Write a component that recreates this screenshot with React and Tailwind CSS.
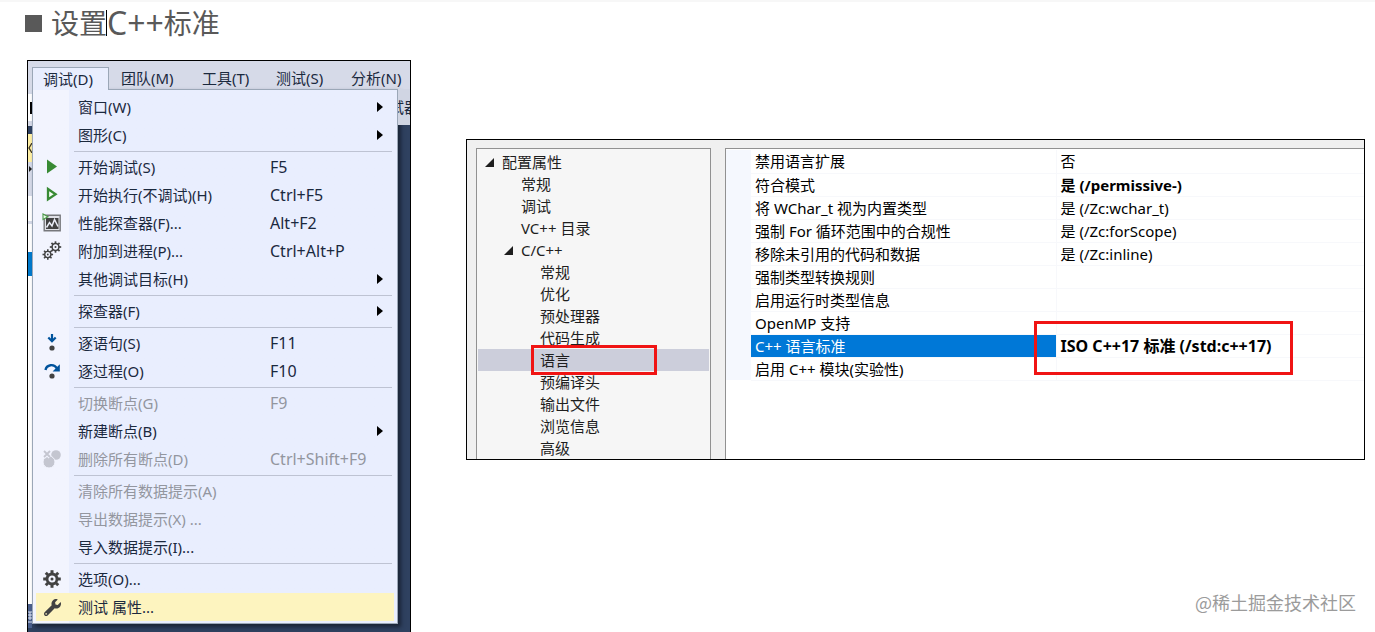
import React from 'react';
import { FaWrench } from 'react-icons/fa';

const FONT = "font-['Noto_Sans','Noto_Sans_CJK_SC',sans-serif]";

const TEETH = [0, 45, 90, 135, 180, 225, 270, 315];

const Cog = ({ cx, cy, r, width, tooth, toothWidth, hub }) => (
  <g stroke="currentColor" fill="none">
    <circle cx={cx} cy={cy} r={r} strokeWidth={width} />
    {TEETH.map((deg) => (
      <path
        key={deg}
        d={`M${cx} ${cy - r}v${-tooth}`}
        strokeWidth={toothWidth}
        transform={`rotate(${deg} ${cx} ${cy})`}
      />
    ))}
    <circle cx={cx} cy={cy} r={hub} fill="currentColor" stroke="none" />
  </g>
);

const icons = {
  start: (
    <svg viewBox="0 0 20 20" className="size-5 text-[#388a34]">
      <path d="M5 2.5v14L15 9.5z" fill="currentColor" />
    </svg>
  ),
  startNoDebug: (
    <svg viewBox="0 0 20 20" className="size-5 text-[#388a34]">
      <path d="M6 4v10.400l7.600-5.200z" fill="#f5fff5" stroke="currentColor" strokeWidth="2.3" />
    </svg>
  ),
  profiler: (
    <svg viewBox="0 0 20 20" className="size-5 text-[#424242]">
      <path d="M2.2 2.2h16v15.6h-16z" fill="#dfe0e6" stroke="#77787c" strokeWidth="1.4" />
      <path d="M4 5h12.5v11H4z" fill="currentColor" />
      <path d="M4.5 14.5l3-5 2.5 3.5 2.5-6.5 3.5 7" fill="none" stroke="#eceef8" strokeWidth="1.5" />
      <path d="M1 1v5.5l5-2.8z" fill="#eefaee" stroke="#4c9a48" strokeWidth="1.1" />
    </svg>
  ),
  attach: (
    <svg viewBox="0 0 20 20" className="size-5 text-[#424242]">
      <Cog cx={13.5} cy={6} r={3.4} width={1.5} tooth={2.300} toothWidth={1.7} hub={1} />
      <Cog cx={5.8} cy={13.5} r={3.100} width={1.4} tooth={2.200} toothWidth={1.6} hub={0.9} />
    </svg>
  ),
  stepInto: (
    <svg viewBox="0 0 20 20" className="size-5">
      <path d="M10 1v7M6.3 4.5L10 8.2l3.7-3.7" fill="none" stroke="#00539c" strokeWidth="2.2" />
      <circle cx="10" cy="15" r="2.6" fill="#424242" />
    </svg>
  ),
  stepOver: (
    <svg viewBox="0 0 20 20" className="size-5">
      <path d="M3.5 9C4.5 3.5 12 2.2 15 7.5" fill="none" stroke="#00539c" strokeWidth="2.4" />
      <path d="M17.800 3.200v7.200h-7.200z" fill="#00539c" />
      <circle cx="10" cy="15" r="2.6" fill="#424242" />
    </svg>
  ),
  deleteAll: (
    <svg viewBox="0 0 20 20" className="size-5 text-[#c4c6d0]">
      <circle cx="14" cy="6" r="4.8" fill="currentColor" />
      <circle cx="7" cy="13" r="6" fill="currentColor" stroke="#f2f4fe" />
      <path d="M2 2l6 6M8 2L2 8" stroke="#f2f4fe" strokeWidth="4" />
      <path d="M2 2l6 6M8 2L2 8" stroke="currentColor" strokeWidth="1.8" />
    </svg>
  ),
  options: (
    <svg viewBox="0 0 20 20" className="size-5 text-[#424242]">
      <Cog cx={10} cy={10} r={5} width={2.8} tooth={3.8} toothWidth={3} hub={1.5} />
    </svg>
  ),
  wrench: <FaWrench className="size-[17px] text-[#424242]" />,
};

const menuBar = [
  { label: '团队(M)', width: 'w-[81px]' },
  { label: '工具(T)', width: 'w-[74px]' },
  { label: '测试(S)', width: 'w-[75px]' },
  { label: '分析(N)', width: 'w-[59px]' },
];

const menuGroups = [
  [
    { label: '窗口(W)', sub: true },
    { label: '图形(C)', sub: true },
  ],
  [
    { label: '开始调试(S)', keys: 'F5', icon: 'start' },
    { label: '开始执行(不调试)(H)', keys: 'Ctrl+F5', icon: 'startNoDebug' },
    { label: '性能探查器(F)...', keys: 'Alt+F2', icon: 'profiler' },
    { label: '附加到进程(P)...', keys: 'Ctrl+Alt+P', icon: 'attach' },
    { label: '其他调试目标(H)', sub: true },
  ],
  [{ label: '探查器(F)', sub: true }],
  [
    { label: '逐语句(S)', keys: 'F11', icon: 'stepInto' },
    { label: '逐过程(O)', keys: 'F10', icon: 'stepOver' },
  ],
  [
    { label: '切换断点(G)', keys: 'F9', disabled: true },
    { label: '新建断点(B)', sub: true },
    { label: '删除所有断点(D)', keys: 'Ctrl+Shift+F9', icon: 'deleteAll', disabled: true },
  ],
  [
    { label: '清除所有数据提示(A)', disabled: true },
    { label: '导出数据提示(X) ...', disabled: true },
    { label: '导入数据提示(I)...' },
  ],
  [
    { label: '选项(O)...', icon: 'options' },
    { label: '测试 属性...', icon: 'wrench', active: true },
  ],
];

const tree = [
  { label: '配置属性', level: 0, open: true },
  { label: '常规', level: 1 },
  { label: '调试', level: 1 },
  { label: 'VC++ 目录', level: 1 },
  { label: 'C/C++', level: 1, open: true },
  { label: '常规', level: 2 },
  { label: '优化', level: 2 },
  { label: '预处理器', level: 2 },
  { label: '代码生成', level: 2 },
  { label: '语言', level: 2, selected: true },
  { label: '预编译头', level: 2 },
  { label: '输出文件', level: 2 },
  { label: '浏览信息', level: 2 },
  { label: '高级', level: 2 },
];

const indent = ['pl-[7px]', 'pl-[26px]', 'pl-[45px]'];

const properties = [
  { name: '禁用语言扩展', value: '否' },
  { name: '符合模式', value: '是 (/permissive-)', bold: true },
  { name: '将 WChar_t 视为内置类型', value: '是 (/Zc:wchar_t)' },
  { name: '强制 For 循环范围中的合规性', value: '是 (/Zc:forScope)' },
  { name: '移除未引用的代码和数据', value: '是 (/Zc:inline)' },
  { name: '强制类型转换规则', value: '' },
  { name: '启用运行时类型信息', value: '' },
  { name: 'OpenMP 支持', value: '' },
  { name: 'C++ 语言标准', value: 'ISO C++17 标准 (/std:c++17)', bold: true, selected: true },
  { name: '启用 C++ 模块(实验性)', value: '' },
];

const MenuItem = ({ item }) => (
  <button
    type="button"
    role="menuitem"
    disabled={item.disabled}
    className={`mx-[3px] flex h-7 items-center text-left ${item.active ? 'bg-[#fdf4bf]' : ''} ${
      item.disabled ? 'text-[#93969f]' : 'text-[#1b293e]'
    }`}
  >
    <span className="flex w-8 shrink-0 justify-center">{item.icon && icons[item.icon]}</span>
    <span className="w-[202px] shrink-0 pl-[10px] whitespace-nowrap">{item.label}</span>
    <span className="flex-1 text-[16px] whitespace-nowrap">{item.keys}</span>
    {item.sub && (
      <svg viewBox="0 0 6 10" className="mr-[11px] h-[10px] w-[6px] fill-black">
        <path d="M0 0l6 5-6 5z" />
      </svg>
    )}
  </button>
);

const DebugMenu = () => (
  <section className="flex w-[384px] shrink-0 flex-col overflow-hidden border-x border-t border-black bg-[#2f4160] text-[15px] leading-[20px] text-[#1b293e]">
    <nav className="flex h-7 items-end bg-[#d6dae8] pl-[4px]">
      <button
        type="button"
        className="relative z-10 -mb-px h-[23px] w-[77px] shrink-0 border border-b-0 border-[#9ba7b7] bg-[#e9eefe] pl-[10px] text-left whitespace-nowrap"
      >
        调试(D)
      </button>
      {menuBar.map((m) => (
        <button key={m.label} type="button" className={`h-[22px] shrink-0 pl-3 text-left whitespace-nowrap ${m.width}`}>
          {m.label}
        </button>
      ))}
    </nav>
    <div className="flex flex-1">
      {/* Editor showing on the left of the menu */}
      <div className="flex w-[4px] shrink-0 flex-col overflow-hidden">
        <div className="h-[5px] bg-[#d6dae8]" />
        <div className="flex h-[27px] items-center justify-end bg-white">
          <span className="h-3 w-[2px] bg-black" />
        </div>
        <div className="h-[5px] bg-[#d6dae8]" />
        <div className="h-2" />
        <div className="flex h-[28px] items-center bg-[#fff0a5]">
          <svg viewBox="0 0 4 10" className="h-[10px] w-[4px]">
            <path d="M4 0L1 5l3 5" fill="none" stroke="#3d3520" strokeWidth="1.3" />
          </svg>
        </div>
        <div className="h-[34px] bg-[#d6dae8] pt-1">
          <svg viewBox="0 0 4 6" className="h-[6px] w-[4px]">
            <path d="M1 0l3 3-3 3z" fill="#1e1e1e" />
          </svg>
        </div>
        <div className="h-[25px] bg-white" />
        <div className="h-[3px] bg-[#d6dae8]" />
        <div className="h-[28px] bg-white" />
        <div className="h-6 bg-[#007acc]" />
        <div className="h-[328px] bg-white" />
        <div className="h-6 bg-[#4a5f8c] pt-[6px]">
          <svg viewBox="0 0 4 14" className="h-[14px] w-[4px]">
            <path d="M0 2h4M0 5h4M0 8h4M0 12h4M2 2v8" stroke="#dfe6f5" fill="none" />
          </svg>
        </div>
      </div>
      <div
        role="menu"
        className="mb-2 flex flex-1 flex-col border border-[#9ba7b7] bg-linear-to-r from-[#f2f4fe] from-[36px] to-[#e9eefe] to-[36px] pt-[3px] pb-[2px] shadow-[3px_3px_4px_#1a2436]"
      >
        {menuGroups.map((group, i) => (
          <React.Fragment key={i}>
            {i > 0 && <div role="separator" className="mt-[2px] mr-[5px] ml-[41px] h-[2px] border-t border-[#bec3d3]" />}
            {group.map((item) => (
              <MenuItem key={item.label} item={item} />
            ))}
          </React.Fragment>
        ))}
      </div>
      {/* Toolbar and window edge on the right */}
      <div className="w-3 shrink-0 overflow-hidden">
        <div className="-ml-[9px] flex h-9 items-center bg-[#d0d5e3] whitespace-nowrap">试器</div>
      </div>
    </div>
  </section>
);

const PropertyPages = () => (
  <section className="mt-[79px] flex h-[321px] overflow-hidden border border-black bg-[#f0f0f0] pt-2 pl-[9px] text-[15px] text-black">
    <ul className="w-[235px] shrink-0 border border-b-0 border-[#919191] bg-[#f6f6f6] px-px pt-[2px] text-[#1e1e1e]">
      {tree.map((node, i) => (
        <li
          key={i}
          className={`relative flex h-[22px] items-center whitespace-nowrap ${indent[node.level]} ${
            node.selected ? 'bg-[#cccedb]' : ''
          }`}
        >
          <span className="w-[17px] shrink-0">
            {node.open && (
              <svg viewBox="0 0 9 9" className="size-[9px] fill-[#1e1e1e]">
                <path d="M9 0v9H0z" />
              </svg>
            )}
          </span>
          {node.label}
          {node.selected && (
            <span className="absolute -top-1 left-[53px] h-[30px] w-[126px] border-3 border-[#f01414]" />
          )}
        </li>
      ))}
    </ul>
    <div className="ml-[14px] flex-1 border-t border-l border-[#919191] bg-white pt-px">
      <table className="w-full table-fixed border-collapse">
        <colgroup>
          <col className="w-[25px]" />
          <col className="w-[305px]" />
          <col />
        </colgroup>
        <tbody>
          {properties.map((p) => (
            <tr key={p.name} className="h-[23px] leading-[22px] whitespace-nowrap">
              <td className="bg-[#f5f8fe] p-0" />
              <th
                scope="row"
                className={`border-b border-[#f7f8fb] p-0 pl-1 text-left font-normal ${
                  p.selected ? 'bg-[#0078d7] text-white' : ''
                }`}
              >
                {p.name}
              </th>
              <td
                className={`relative border-b border-l border-[#f7f8fb] p-0 pl-1 ${p.bold ? 'font-bold' : ''} ${
                  p.selected ? 'text-[16px]' : ''
                }`}
              >
                {p.value}
                {p.selected && (
                  <span className="absolute -top-[14px] -left-[23px] h-[54px] w-[259px] border-3 border-[#f01414]" />
                )}
              </td>
            </tr>
          ))}
        </tbody>
      </table>
    </div>
  </section>
);

const App = () => {
  return (
    <main className={`flex min-h-screen flex-col border-t-2 border-[#f7f7f7] bg-white ${FONT}`}>
      <h1 className="flex h-[42px] items-center pl-[25px] text-[28px] leading-none text-[#595959]">
        <span className="mr-[9px] size-[17px] bg-[#595959]" />
        设置
        <span className="-ml-px h-[26px] w-px bg-black" />
        <span className="text-[32px]">C++</span>
        标准
      </h1>
      <div className="flex flex-1 pt-4 pl-[27px]">
        <DebugMenu />
        <div className="ml-[55px] flex min-w-0 flex-1 flex-col pr-[10px]">
          <PropertyPages />
          <p className="mt-auto mb-[18px] pr-[9px] text-right font-['Noto_Sans_CJK_SC',sans-serif] text-[18px] leading-6 text-[#9b9b9b]">
            @稀土掘金技术社区
          </p>
        </div>
      </div>
    </main>
  );
};

export default App;
